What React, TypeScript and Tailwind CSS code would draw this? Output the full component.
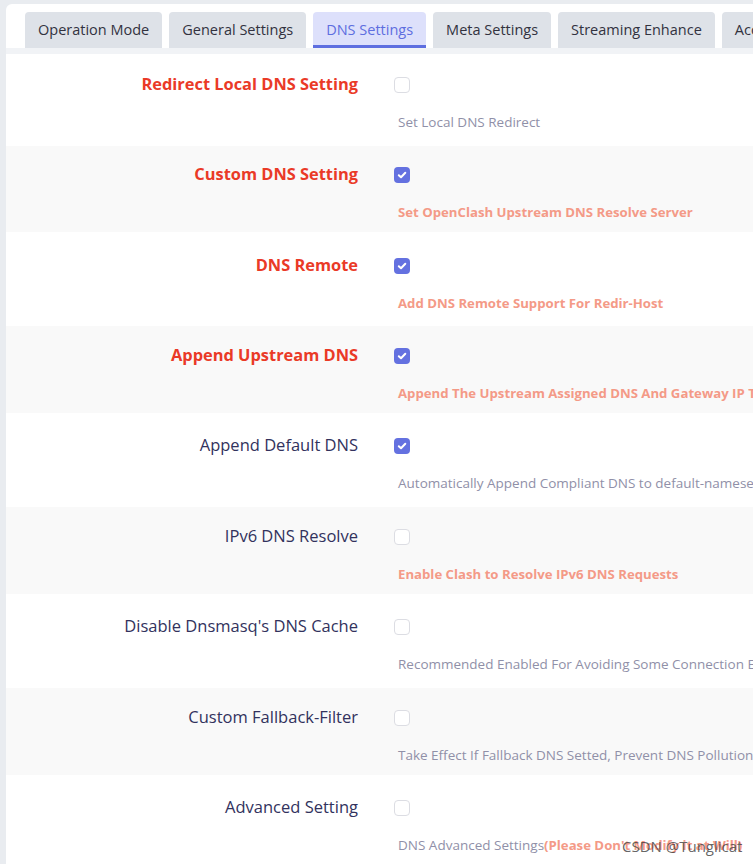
import React from "react";

// ---------------------------------------------------------------------------
// Data
// ---------------------------------------------------------------------------

type Row = {
  label: string;
  strong: boolean;
  checked: boolean;
  desc: string;
  descStrong: boolean;
  extra?: string;
};

const TABS = [
  "Operation Mode",
  "General Settings",
  "DNS Settings",
  "Meta Settings",
  "Streaming Enhance",
  "Access Control",
];
const ACTIVE_TAB = 2;

const ROWS: Row[] = [
  { label: "Redirect Local DNS Setting", strong: true, checked: false, desc: "Set Local DNS Redirect", descStrong: false },
  { label: "Custom DNS Setting", strong: true, checked: true, desc: "Set OpenClash Upstream DNS Resolve Server", descStrong: true },
  { label: "DNS Remote", strong: true, checked: true, desc: "Add DNS Remote Support For Redir-Host", descStrong: true },
  { label: "Append Upstream DNS", strong: true, checked: true, desc: "Append The Upstream Assigned DNS And Gateway IP To The Nameserver", descStrong: true },
  { label: "Append Default DNS", strong: false, checked: true, desc: "Automatically Append Compliant DNS to default-nameserver", descStrong: false },
  { label: "IPv6 DNS Resolve", strong: false, checked: false, desc: "Enable Clash to Resolve IPv6 DNS Requests", descStrong: true },
  { label: "Disable Dnsmasq's DNS Cache", strong: false, checked: false, desc: "Recommended Enabled For Avoiding Some Connection Errors", descStrong: false },
  { label: "Custom Fallback-Filter", strong: false, checked: false, desc: "Take Effect If Fallback DNS Setted, Prevent DNS Pollution", descStrong: false },
  { label: "Advanced Setting", strong: false, checked: false, desc: "DNS Advanced Settings", descStrong: false, extra: "(Please Don't Modify it at Will)" },
];

// row boxes: height + top padding, striped like the reference
const ROW_BOX = [
  "h-[92px] pt-[18px] bg-white",
  "h-[86px] pt-[16px] bg-[#f9f9f9]",
  "h-[94px] pt-[21px] bg-white",
  "h-[87px] pt-[17px] bg-[#f9f9f9]",
  "h-[94px] pt-[20px] bg-white",
  "h-[87px] pt-[17px] bg-[#f9f9f9]",
  "h-[94px] pt-[20px] bg-white",
  "h-[87px] pt-[17px] bg-[#f9f9f9]",
  "h-[94px] pt-[20px] bg-white",
];

// ---------------------------------------------------------------------------
// Pieces
// ---------------------------------------------------------------------------

function Checkbox({ checked }: { checked: boolean }) {
  if (checked) {
    return (
      <span className="flex h-4 w-4 items-center justify-center rounded-[4px] bg-[#6471e0]">
        <svg width="10" height="10" viewBox="0 0 10 10">
          <path
            d="M1.8 5.2 L4 7.3 L8.3 2.8"
            fill="none"
            stroke="white"
            strokeWidth="2"
            strokeLinecap="round"
            strokeLinejoin="round"
          />
        </svg>
      </span>
    );
  }
  return <span className="block h-4 w-4 rounded-[4px] border border-[#dcdde3] bg-white" />;
}

function SettingRow({ row, index }: { row: Row; index: number }) {
  return (
    <div className={`flex ${ROW_BOX[index]}`}>
      <div className="w-[352px] shrink-0 text-right">
        <span
          className={
            row.strong
              ? "text-[16.4px] leading-6 font-bold text-[#ea3a27]"
              : "text-[16.5px] leading-6 text-[#32325d]"
          }
        >
          {row.label}
        </span>
      </div>
      <div className="ml-[36px] flex flex-col">
        <div className="flex h-6 items-center pt-px">
          <Checkbox checked={row.checked} />
        </div>
        <div className="mt-[16px] pl-1 text-[13.5px] leading-5">
          <span
            className={
              row.descStrong ? "text-[13.2px] font-bold text-[#f49a87]" : "text-[#9090a8]"
            }
          >
            {row.desc}
          </span>
          {row.extra && (
            <span className="text-[13.2px] font-bold text-[#f49a87]">{row.extra}</span>
          )}
        </div>
      </div>
    </div>
  );
}

// ---------------------------------------------------------------------------
// Page
// ---------------------------------------------------------------------------

export default function App() {
  return (
    <div
      className="relative h-[864px] w-[753px] overflow-hidden bg-[#e9ecf0] pl-[6px] pt-[4px] whitespace-nowrap"
      style={{ fontFamily: '"Open Sans", "Noto Sans", sans-serif' }}
    >
      <div className="w-[1100px] rounded-tl-[6px] bg-white">
        {/* Tabs */}
        <div className="flex gap-[7px] pl-[19px] pt-[8px]">
          {TABS.map((t, i) =>
            i === ACTIVE_TAB ? (
              <div
                key={t}
                className="flex h-9 items-center rounded-t-[4px] border-b-[3px] border-[#5e6ee0] bg-[#dde0fb] px-[13px] pt-[3px] text-[14.5px] text-[#5e6ee0]"
              >
                {t}
              </div>
            ) : (
              <div
                key={t}
                className="flex h-9 items-center rounded-t-[4px] bg-[#dee2e8] px-[13px] text-[14.5px] text-[#32323f]"
              >
                {t}
              </div>
            )
          )}
        </div>
        <div className="h-[6px] bg-[#f1f3f6]" />

        {/* Settings rows */}
        {ROWS.map((r, i) => (
          <SettingRow key={r.label} row={r} index={i} />
        ))}
      </div>

      {/* watermark */}
      <span className="absolute left-[622px] top-[835px] text-[15px] text-[#3c3c3c]/80">
        CSDN @Tunglicat
      </span>
    </div>
  );
}
